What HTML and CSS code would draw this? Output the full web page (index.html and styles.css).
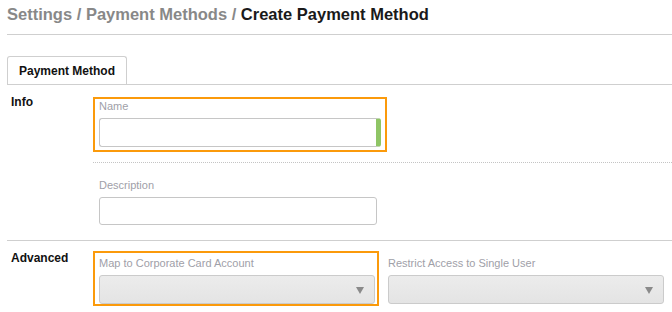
FILE: index.html
```html
<!DOCTYPE html>
<html>
<head>
<meta charset="UTF-8">
<link rel="stylesheet" href="styles.css">
<title>Create Payment Method</title>
</head>
<body>
  <div class="page">
    <div class="header">
      <h1 class="crumbs"><span class="crumb">Settings</span> <span class="crumb">/</span> <span class="crumb">Payment Methods</span> <span class="crumb">/</span> Create Payment Method</h1>
    </div>

    <div class="tabs">
      <div class="tab">Payment Method</div>
    </div>

    <div class="section">
      <div class="section-label">Info</div>
      <div class="section-body">
        <div class="row row-name">
          <div class="field highlight">
            <label class="field-label">Name</label>
            <input type="text" class="text-input valid">
          </div>
        </div>
        <div class="row row-desc">
          <div class="field">
            <label class="field-label">Description</label>
            <input type="text" class="text-input">
          </div>
        </div>
      </div>
    </div>

    <div class="section section-last">
      <div class="section-label">Advanced</div>
      <div class="section-body">
        <div class="row row-adv">
          <div class="field highlight tight">
            <label class="field-label">Map to Corporate Card Account</label>
            <div class="select"><span class="caret"></span></div>
          </div>
          <div class="field tight">
            <label class="field-label">Restrict Access to Single User</label>
            <div class="select"><span class="caret"></span></div>
          </div>
        </div>
      </div>
    </div>
  </div>
</body>
</html>
```

FILE: styles.css
```css
body {
  margin: 0;
  background-color: #fff;
  font-family: "Liberation Sans", Arial, sans-serif;
  color: #1a1a1a;
}
.page {
  padding-left: 7px;
}
.header {
  border-bottom: 1px solid #cfcfcf;
  height: 34px;
}
.crumbs {
  margin: 0;
  padding-top: 4px;
  font-size: 16.5px;
  line-height: 20px;
  font-weight: bold;
  color: #1a1a1a;
}
.crumb {
  color: #888;
}

.tabs {
  margin-top: 21px;
  border-bottom: 1px solid #cfcfcf;
  display: flex;
}
.tab {
  width: 118px;
  height: 27px;
  line-height: 28px;
  text-align: center;
  border: 1px solid #cfcfcf;
  border-bottom: none;
  border-radius: 3px 3px 0 0;
  font-size: 12px;
  font-weight: bold;
  color: #111;
}

.section {
  display: flex;
  border-bottom: 1px solid #cfcfcf;
}
.section-last {
  border-bottom: none;
}
.section-label {
  width: 82px;
  flex-shrink: 0;
  padding: 10px 0 0 4px;
  font-size: 12px;
  line-height: 14px;
  font-weight: bold;
  color: #111;
}
.section-body {
  flex: 1;
}
.row {
  display: flex;
  gap: 3px;
}
.row-name {
  padding: 12px 0 10px;
  border-bottom: 1px dotted #c4c4c4;
}
.row-desc {
  padding: 13px 0 10px;
}
.row-adv {
  padding-top: 10px;
}

.field {
  flex-shrink: 0;
  border: 2px solid transparent;
  padding: 0 2px 3px 4px;
}
.field.tight {
  padding: 3px 2px 0 4px;
}
.highlight {
  border-color: #fb9a0b;
}
.field-label {
  display: block;
  font-size: 11px;
  line-height: 14px;
  color: #a0a0a8;
  margin-bottom: 5px;
}
.text-input {
  display: block;
  box-sizing: border-box;
  width: 278px;
  height: 28px;
  margin: 0;
  border: 1px solid #c6c6c6;
  border-radius: 3px;
  background: #fff;
  outline: none;
}
.text-input.valid {
  width: 282px;
  height: 29px;
  border-right: 5px solid #8fc565;
}
.field.highlight .text-input.valid {
  margin-right: 2px;
}
.select {
  position: relative;
  box-sizing: border-box;
  width: 276px;
  height: 29px;
  border: 1px solid #cbcbcb;
  border-radius: 3px;
  background: linear-gradient(#ececec, #e4e4e4);
}
.caret {
  position: absolute;
  right: 10px;
  top: 11px;
  width: 0;
  height: 0;
  border-left: 4px solid transparent;
  border-right: 4px solid transparent;
  border-top: 7px solid #8a8a8a;
}
```
